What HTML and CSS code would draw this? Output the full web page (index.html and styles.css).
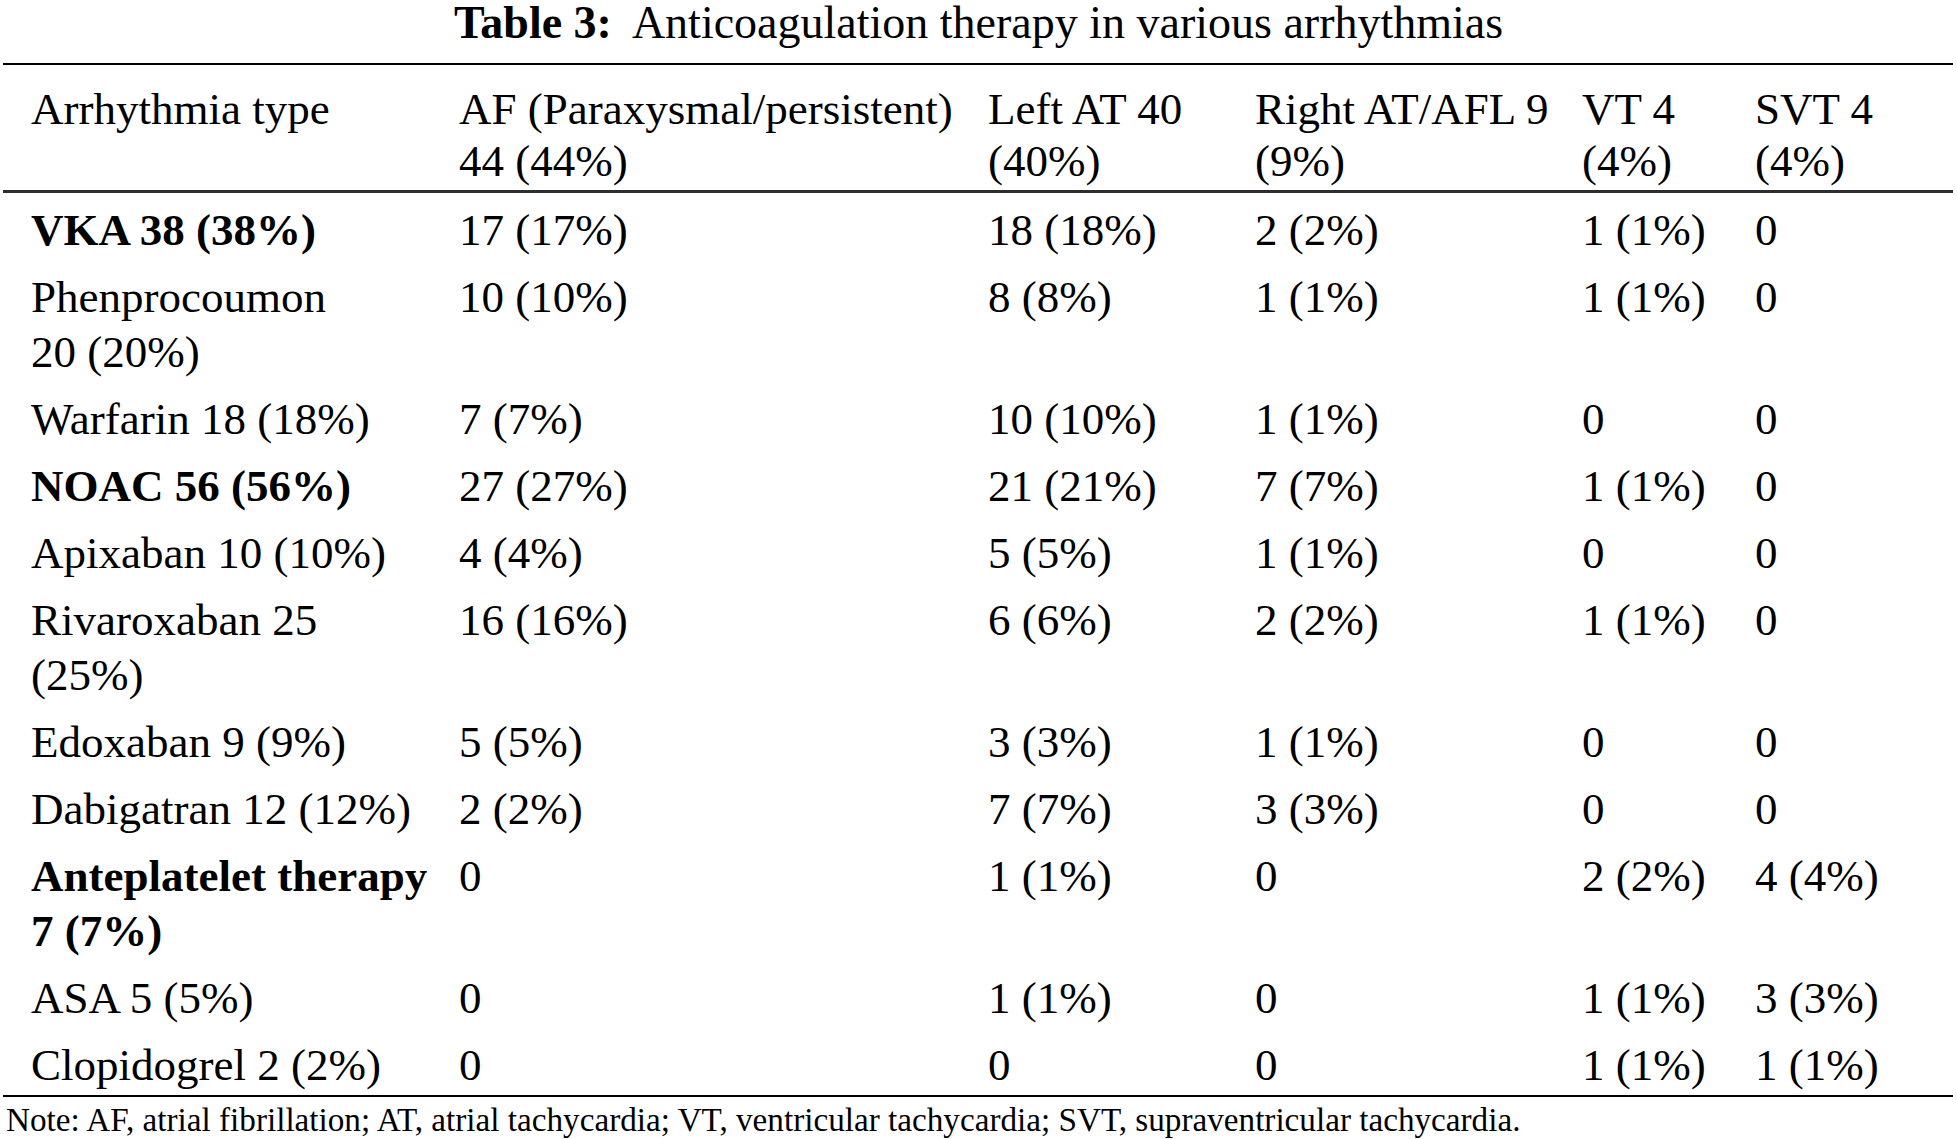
FILE: index.html
```html
<!DOCTYPE html>
<html lang="en">
<head>
<meta charset="utf-8">
<title>Table 3: Anticoagulation therapy in various arrhythmias</title>
<link rel="stylesheet" href="styles.css">
</head>
<body>
<div class="page">
  <h1 class="caption"><span class="label">Table 3:</span> Anticoagulation therapy in various arrhythmias</h1>
  <table class="data">
    <colgroup>
      <col class="c1"><col class="c2"><col class="c3"><col class="c4"><col class="c5"><col class="c6">
    </colgroup>
    <thead>
      <tr>
        <th>Arrhythmia type</th>
        <th>AF (Paraxysmal/persistent)<br>44 (44%)</th>
        <th>Left AT 40<br>(40%)</th>
        <th>Right AT/AFL 9<br>(9%)</th>
        <th>VT 4<br>(4%)</th>
        <th>SVT 4<br>(4%)</th>
      </tr>
    </thead>
    <tbody>
      <tr><td class="strong">VKA 38 (38%)</td><td>17 (17%)</td><td>18 (18%)</td><td>2 (2%)</td><td>1 (1%)</td><td>0</td></tr>
      <tr><td>Phenprocoumon<br>20 (20%)</td><td>10 (10%)</td><td>8 (8%)</td><td>1 (1%)</td><td>1 (1%)</td><td>0</td></tr>
      <tr><td>Warfarin 18 (18%)</td><td>7 (7%)</td><td>10 (10%)</td><td>1 (1%)</td><td>0</td><td>0</td></tr>
      <tr><td class="strong">NOAC 56 (56%)</td><td>27 (27%)</td><td>21 (21%)</td><td>7 (7%)</td><td>1 (1%)</td><td>0</td></tr>
      <tr><td>Apixaban 10 (10%)</td><td>4 (4%)</td><td>5 (5%)</td><td>1 (1%)</td><td>0</td><td>0</td></tr>
      <tr><td>Rivaroxaban 25<br>(25%)</td><td>16 (16%)</td><td>6 (6%)</td><td>2 (2%)</td><td>1 (1%)</td><td>0</td></tr>
      <tr><td>Edoxaban 9 (9%)</td><td>5 (5%)</td><td>3 (3%)</td><td>1 (1%)</td><td>0</td><td>0</td></tr>
      <tr><td>Dabigatran 12 (12%)</td><td>2 (2%)</td><td>7 (7%)</td><td>3 (3%)</td><td>0</td><td>0</td></tr>
      <tr><td class="strong">Anteplatelet therapy<br>7 (7%)</td><td>0</td><td>1 (1%)</td><td>0</td><td>2 (2%)</td><td>4 (4%)</td></tr>
      <tr><td>ASA 5 (5%)</td><td>0</td><td>1 (1%)</td><td>0</td><td>1 (1%)</td><td>3 (3%)</td></tr>
      <tr><td>Clopidogrel 2 (2%)</td><td>0</td><td>0</td><td>0</td><td>1 (1%)</td><td>1 (1%)</td></tr>
    </tbody>
  </table>
  <p class="note">Note: AF, atrial fibrillation; AT, atrial tachycardia; VT, ventricular tachycardia; SVT, supraventricular tachycardia.</p>
</div>
</body>
</html>
```

FILE: styles.css
```css
html, body {
  margin: 0;
  padding: 0;
  background: #ffffff;
}

body {
  font-family: "Liberation Serif", "Times New Roman", serif;
  color: #000000;
}

.page {
  width: 1957px;
  display: flex;
  flex-direction: column;
}

.caption {
  margin: 0;
  font-size: 46px;
  font-weight: normal;
  line-height: 46px;
  text-align: center;
}

.caption .label {
  font-weight: bold;
  margin-right: 11px;
}

.data {
  margin: 17px 0 0 3px;
  width: 1950px;
  table-layout: fixed;
  border-collapse: collapse;
  font-size: 45px;
  line-height: 55px;
}

.c1 { width: 456px; }
.c2 { width: 529px; }
.c3 { width: 267px; }
.c4 { width: 327px; }
.c5 { width: 173px; }
.c6 { width: 198px; }

.data thead tr {
  border-top: 2px solid #000000;
  border-bottom: 3px solid #2e2e2e;
}

.data th {
  font-weight: normal;
  text-align: left;
  vertical-align: top;
  line-height: 52px;
  padding: 18px 0 3px 0;
}

.data td {
  text-align: left;
  vertical-align: top;
  padding: 10px 0 2px 0;
}

.data th:first-child,
.data td:first-child {
  padding-left: 28px;
}

.data tbody tr:last-child {
  border-bottom: 2px solid #000000;
}

.data td.strong {
  font-weight: bold;
}

.note {
  margin: 4px 0 0 6px;
  font-size: 33.2px;
  line-height: 38px;
}
```
